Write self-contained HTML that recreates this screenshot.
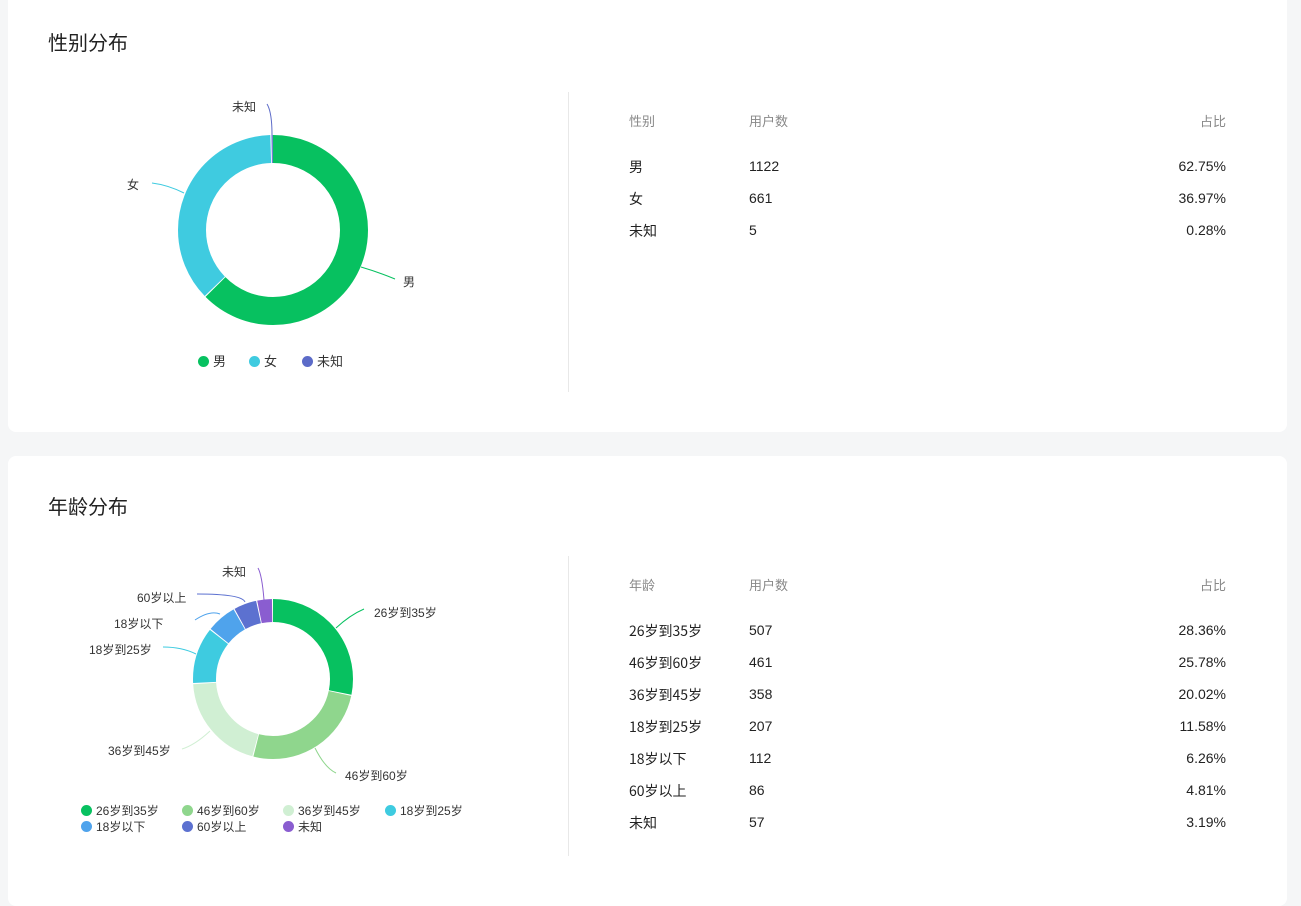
<!DOCTYPE html>
<html><head><meta charset="utf-8"><style>
body{margin:0;background:#f5f6f7;width:1301px;height:889px;overflow:hidden;font-family:"Liberation Sans","Noto Sans CJK SC",sans-serif;color:#222;position:relative}
.card{position:absolute;left:8px;width:1279px;background:#fff;border-radius:8px}
.t{position:absolute;font-size:20px;color:#222;font-family:"Noto Sans CJK SC",sans-serif;font-weight:400;line-height:24px}
.a{position:absolute;font-size:14px;color:#222;white-space:nowrap;line-height:18px;height:18px}
.a span,.c{font-family:"Noto Sans CJK SC",sans-serif}
.a.c:not(.h){margin-top:2px}
.h{color:#888;font-size:13px}
.s{position:absolute;font-size:12px;color:#333;white-space:nowrap;line-height:16px}
.vl{position:absolute;left:568px;width:1px;background:#e8e8e8}
.d{display:inline-block;width:11px;height:11px;border-radius:50%;vertical-align:-1px;margin-right:4px}
</style></head><body>
<div class="card" style="top:-10px;height:442px"></div>
<div class="card" style="top:456px;height:450px"></div>
<div class="t" style="left:48px;top:30px">性别分布</div>
<div class="t" style="left:48px;top:494px">年龄分布</div>
<div class="vl" style="top:92px;height:300px"></div>
<div class="vl" style="top:556px;height:300px"></div>
<svg width="1301" height="889" style="position:absolute;left:0;top:0">
<g transform="translate(273,230) rotate(-90)" fill="none" stroke-width="28">
<circle r="81" stroke="#07c160" stroke-dasharray="318.3 600"/>
<circle r="81" stroke="#3fcbe0" stroke-dasharray="187.1 600" stroke-dashoffset="-319.3"/>
<circle r="81" stroke="#5c6bc8" stroke-dasharray="1.2 600" stroke-dashoffset="-507.4"/>
</g>
<g fill="none" stroke-width="1">
<path d="M361,267 Q378,272 395,279" stroke="#07c160"/>
<path d="M184,193 Q168,185 152,183" stroke="#3fcbe0"/>
<path d="M272,135 Q272,112 267,104" stroke="#5c6bc8"/>
</g>
<g transform="translate(273,679) rotate(-90)" fill="none" stroke-width="23">
<circle r="68.5" stroke="#07c160" stroke-dasharray="121.1 600"/>
<circle r="68.5" stroke="#8fd68d" stroke-dasharray="110 600" stroke-dashoffset="-122.1"/>
<circle r="68.5" stroke="#d0efd3" stroke-dasharray="85.2 600" stroke-dashoffset="-233"/>
<circle r="68.5" stroke="#3ecbe0" stroke-dasharray="48.8 600" stroke-dashoffset="-319.2"/>
<circle r="68.5" stroke="#4fa3ec" stroke-dasharray="25.9 600" stroke-dashoffset="-369"/>
<circle r="68.5" stroke="#5c71d0" stroke-dasharray="19.7 600" stroke-dashoffset="-395.9"/>
<circle r="68.5" stroke="#8a5dd0" stroke-dasharray="12.7 600" stroke-dashoffset="-416.6"/>
</g>
<g fill="none" stroke-width="1">
<path d="M336,628 Q350,615 364,609" stroke="#07c160"/>
<path d="M315,748 Q325,768 336,773" stroke="#8fd68d"/>
<path d="M210,731 Q195,745 182,749" stroke="#d0efd3"/>
<path d="M196,654 Q182,647 163,647" stroke="#3ecbe0"/>
<path d="M220,614 Q210,610 195,620" stroke="#4fa3ec"/>
<path d="M245,602 Q242,594 197,594" stroke="#5c71d0"/>
<path d="M264,600 Q262,575 258,568" stroke="#8a5dd0"/>
</g>
</svg>
<div class="s" style="left:232px;top:99px">未知</div>
<div class="s" style="left:127px;top:177px">女</div>
<div class="s" style="left:403px;top:274px">男</div>
<div class="s" style="left:198px;top:354px;font-size:13px"><span class="d" style="background:#07c160"></span>男</div>
<div class="s" style="left:249px;top:354px;font-size:13px"><span class="d" style="background:#3fcbe0"></span>女</div>
<div class="s" style="left:302px;top:354px;font-size:13px"><span class="d" style="background:#5c6bc8"></span>未知</div>
<div class="s" style="left:222px;top:564px">未知</div>
<div class="s" style="left:137px;top:590px">60岁以上</div>
<div class="s" style="left:114px;top:616px">18岁以下</div>
<div class="s" style="left:89px;top:642px">18岁到25岁</div>
<div class="s" style="left:108px;top:743px">36岁到45岁</div>
<div class="s" style="left:374px;top:605px">26岁到35岁</div>
<div class="s" style="left:345px;top:768px">46岁到60岁</div>
<div class="s" style="left:81px;top:803px"><span class="d" style="background:#07c160"></span>26岁到35岁</div>
<div class="s" style="left:182px;top:803px"><span class="d" style="background:#8fd68d"></span>46岁到60岁</div>
<div class="s" style="left:283px;top:803px"><span class="d" style="background:#d0efd3"></span>36岁到45岁</div>
<div class="s" style="left:385px;top:803px"><span class="d" style="background:#3ecbe0"></span>18岁到25岁</div>
<div class="s" style="left:81px;top:819px"><span class="d" style="background:#4fa3ec"></span>18岁以下</div>
<div class="s" style="left:182px;top:819px"><span class="d" style="background:#5c71d0"></span>60岁以上</div>
<div class="s" style="left:283px;top:819px"><span class="d" style="background:#8a5dd0"></span>未知</div>

<div class="a h c" style="left:629px;top:112px">性别</div><div class="a h c" style="left:749px;top:112px">用户数</div><div class="a h c" style="right:75px;top:112px">占比</div>
<div class="a c" style="left:629px;top:156px">男</div><div class="a" style="left:749px;top:157px">1122</div><div class="a" style="right:75px;top:157px">62.75%</div>
<div class="a c" style="left:629px;top:188px">女</div><div class="a" style="left:749px;top:189px">661</div><div class="a" style="right:75px;top:189px">36.97%</div>
<div class="a c" style="left:629px;top:220px">未知</div><div class="a" style="left:749px;top:221px">5</div><div class="a" style="right:75px;top:221px">0.28%</div>

<div class="a h c" style="left:629px;top:576px">年龄</div><div class="a h c" style="left:749px;top:576px">用户数</div><div class="a h c" style="right:75px;top:576px">占比</div>
<div class="a c" style="left:629px;top:620px">26岁到35岁</div><div class="a" style="left:749px;top:621px">507</div><div class="a" style="right:75px;top:621px">28.36%</div>
<div class="a c" style="left:629px;top:652px">46岁到60岁</div><div class="a" style="left:749px;top:653px">461</div><div class="a" style="right:75px;top:653px">25.78%</div>
<div class="a c" style="left:629px;top:684px">36岁到45岁</div><div class="a" style="left:749px;top:685px">358</div><div class="a" style="right:75px;top:685px">20.02%</div>
<div class="a c" style="left:629px;top:716px">18岁到25岁</div><div class="a" style="left:749px;top:717px">207</div><div class="a" style="right:75px;top:717px">11.58%</div>
<div class="a c" style="left:629px;top:748px">18岁以下</div><div class="a" style="left:749px;top:749px">112</div><div class="a" style="right:75px;top:749px">6.26%</div>
<div class="a c" style="left:629px;top:780px">60岁以上</div><div class="a" style="left:749px;top:781px">86</div><div class="a" style="right:75px;top:781px">4.81%</div>
<div class="a c" style="left:629px;top:812px">未知</div><div class="a" style="left:749px;top:813px">57</div><div class="a" style="right:75px;top:813px">3.19%</div>
</body></html>
